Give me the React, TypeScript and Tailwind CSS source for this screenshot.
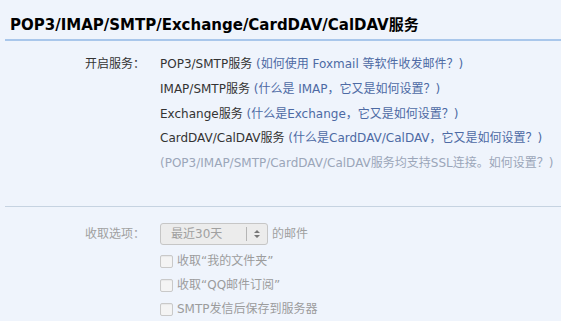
import React from 'react';

const font = { fontFamily: '"DejaVu Sans", "Noto Sans CJK SC", sans-serif' };

const Checkbox = ({ label }: { label: string }) => (
  <label className="flex items-center h-[24px] text-[#9c9c9c]">
    <span className="w-[13px] h-[13px] mr-[4px] rounded-[2px] border border-[#c9c9c9] bg-[#f4f4f4] shadow-[inset_0_1px_1px_rgba(0,0,0,0.05)]" />
    {label}
  </label>
);

export default function App() {
  return (
    <div className="w-[561px] h-[321px] overflow-hidden bg-[#eff4fc] text-[12px] text-[#333]" style={font}>
      {/* Title */}
      <div className="pl-[10px] pt-[14px] h-[39px]">
        <h1 className="text-[15px] font-bold text-black leading-[22px]">
          POP3/IMAP/SMTP/Exchange/CardDAV/CalDAV服务
        </h1>
      </div>
      <div className="ml-[5px] h-[2px] bg-[#a9c7eb]" />

      {/* Services */}
      <div className="flex pt-[11px] h-[165px]">
        <div className="w-[150px] pl-[85px] leading-[24.75px] shrink-0">开启服务：</div>
        <div className="pl-[10px] leading-[24.75px] whitespace-nowrap">
          <div>POP3/SMTP服务 <span className="text-[#4d6aa4]">(如何使用 Foxmail 等软件收发邮件？)</span></div>
          <div>IMAP/SMTP服务 <span className="text-[#4d6aa4]">(什么是 IMAP，它又是如何设置？)</span></div>
          <div>Exchange服务 <span className="text-[#4d6aa4]">(什么是Exchange，它又是如何设置？)</span></div>
          <div>CardDAV/CalDAV服务 <span className="text-[#4d6aa4]">(什么是CardDAV/CalDAV，它又是如何设置？)</span></div>
          <div className="text-[#9ba6b9]">(POP3/IMAP/SMTP/CardDAV/CalDAV服务均支持SSL连接。如何设置？)</div>
        </div>
      </div>
      <div className="ml-[5px] h-[1px] bg-[#c6d3e1]" />

      {/* Fetch options */}
      <div className="flex pt-[15px]">
        <div className="w-[150px] pl-[85px] leading-[24px] shrink-0 text-[#a0a0a0]">收取选项：</div>
        <div className="pl-[10px] whitespace-nowrap">
          <div className="flex items-center h-[24px] text-[#a0a0a0]">
            <div className="flex items-center w-[108px] h-[22px] rounded-[3px] border border-[#c6c6c6] bg-[#ececec]">
              <span className="flex-1 pl-[10px]">最近30天</span>
              <span className="w-[1px] h-[14px] bg-[#b5b5b5]" />
              <svg width="20" height="10" viewBox="0 0 20 10">
                <path d="M7 4 L10 1 L13 4 Z M7 6 L10 9 L13 6 Z" fill="#777" />
              </svg>
            </div>
            <span className="ml-[4px]">的邮件</span>
          </div>
          <div className="pt-[3px]">
            <Checkbox label="收取“我的文件夹”" />
            <Checkbox label="收取“QQ邮件订阅”" />
            <Checkbox label="SMTP发信后保存到服务器" />
          </div>
        </div>
      </div>
    </div>
  );
}
